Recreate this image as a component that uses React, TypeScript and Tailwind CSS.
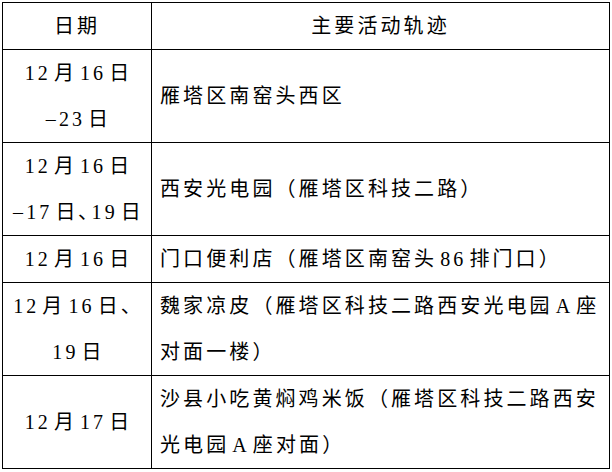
import React from 'react';

type Row = {
  date: string[];
  place: string[];
};

// latin runs get a little extra room, like Word's autospace between CJK and western text
function Mixed({ text }: { text: string }) {
  const parts = text.split(/([–0-9A-Za-z]+)/).filter(Boolean);
  return (
    <>
      {parts.map((p, i) => {
        if (/^[–0-9A-Za-z]+$/.test(p)) {
          const afterComma = parts[i - 1]?.endsWith('､');
          return (
            <span key={i} className={afterComma ? 'mr-[3px]' : 'mx-[3px]'}>
              {p}
            </span>
          );
        }
        return <span key={i}>{p}</span>;
      })}
    </>
  );
}

// mid-line comma uses the half-width form, like Word's punctuation compression
const rows: Row[] = [
  { date: ['12月16日', '–23日'], place: ['雁塔区南窑头西区'] },
  { date: ['12月16日', '–17日､19日'], place: ['西安光电园（雁塔区科技二路）'] },
  { date: ['12月16日'], place: ['门口便利店（雁塔区南窑头86排门口）'] },
  { date: ['12月16日、', '19日'], place: ['魏家凉皮（雁塔区科技二路西安光电园A座', '对面一楼）'] },
  { date: ['12月17日'], place: ['沙县小吃黄焖鸡米饭（雁塔区科技二路西安', '光电园A座对面）'] },
];

export default function App() {
  return (
    <div
      className="w-[612px] h-[472px] bg-white text-black pt-[2px] pl-[2px]"
      style={{ fontFamily: '"Liberation Serif", "Noto Sans CJK SC", serif' }}
    >
      <table className="border-collapse w-[608px] text-[20px] leading-[46px] tracking-[3.1px]">
        <thead>
          <tr>
            <th className="w-[149px] border border-black p-0 font-normal text-center">日期</th>
            <th className="border border-black p-0 font-normal text-center">主要活动轨迹</th>
          </tr>
        </thead>
        <tbody>
          {rows.map((row, i) => (
            <tr key={i}>
              <td className="border border-black p-0 text-center align-middle whitespace-nowrap">
                {row.date.map((line, j) => (
                  <div key={j}>
                    <Mixed text={line} />
                  </div>
                ))}
              </td>
              <td className="border border-black p-0 pl-[8px] text-left align-middle whitespace-nowrap">
                {row.place.map((line, j) => (
                  <div key={j}>
                    <Mixed text={line} />
                  </div>
                ))}
              </td>
            </tr>
          ))}
        </tbody>
      </table>
    </div>
  );
}
